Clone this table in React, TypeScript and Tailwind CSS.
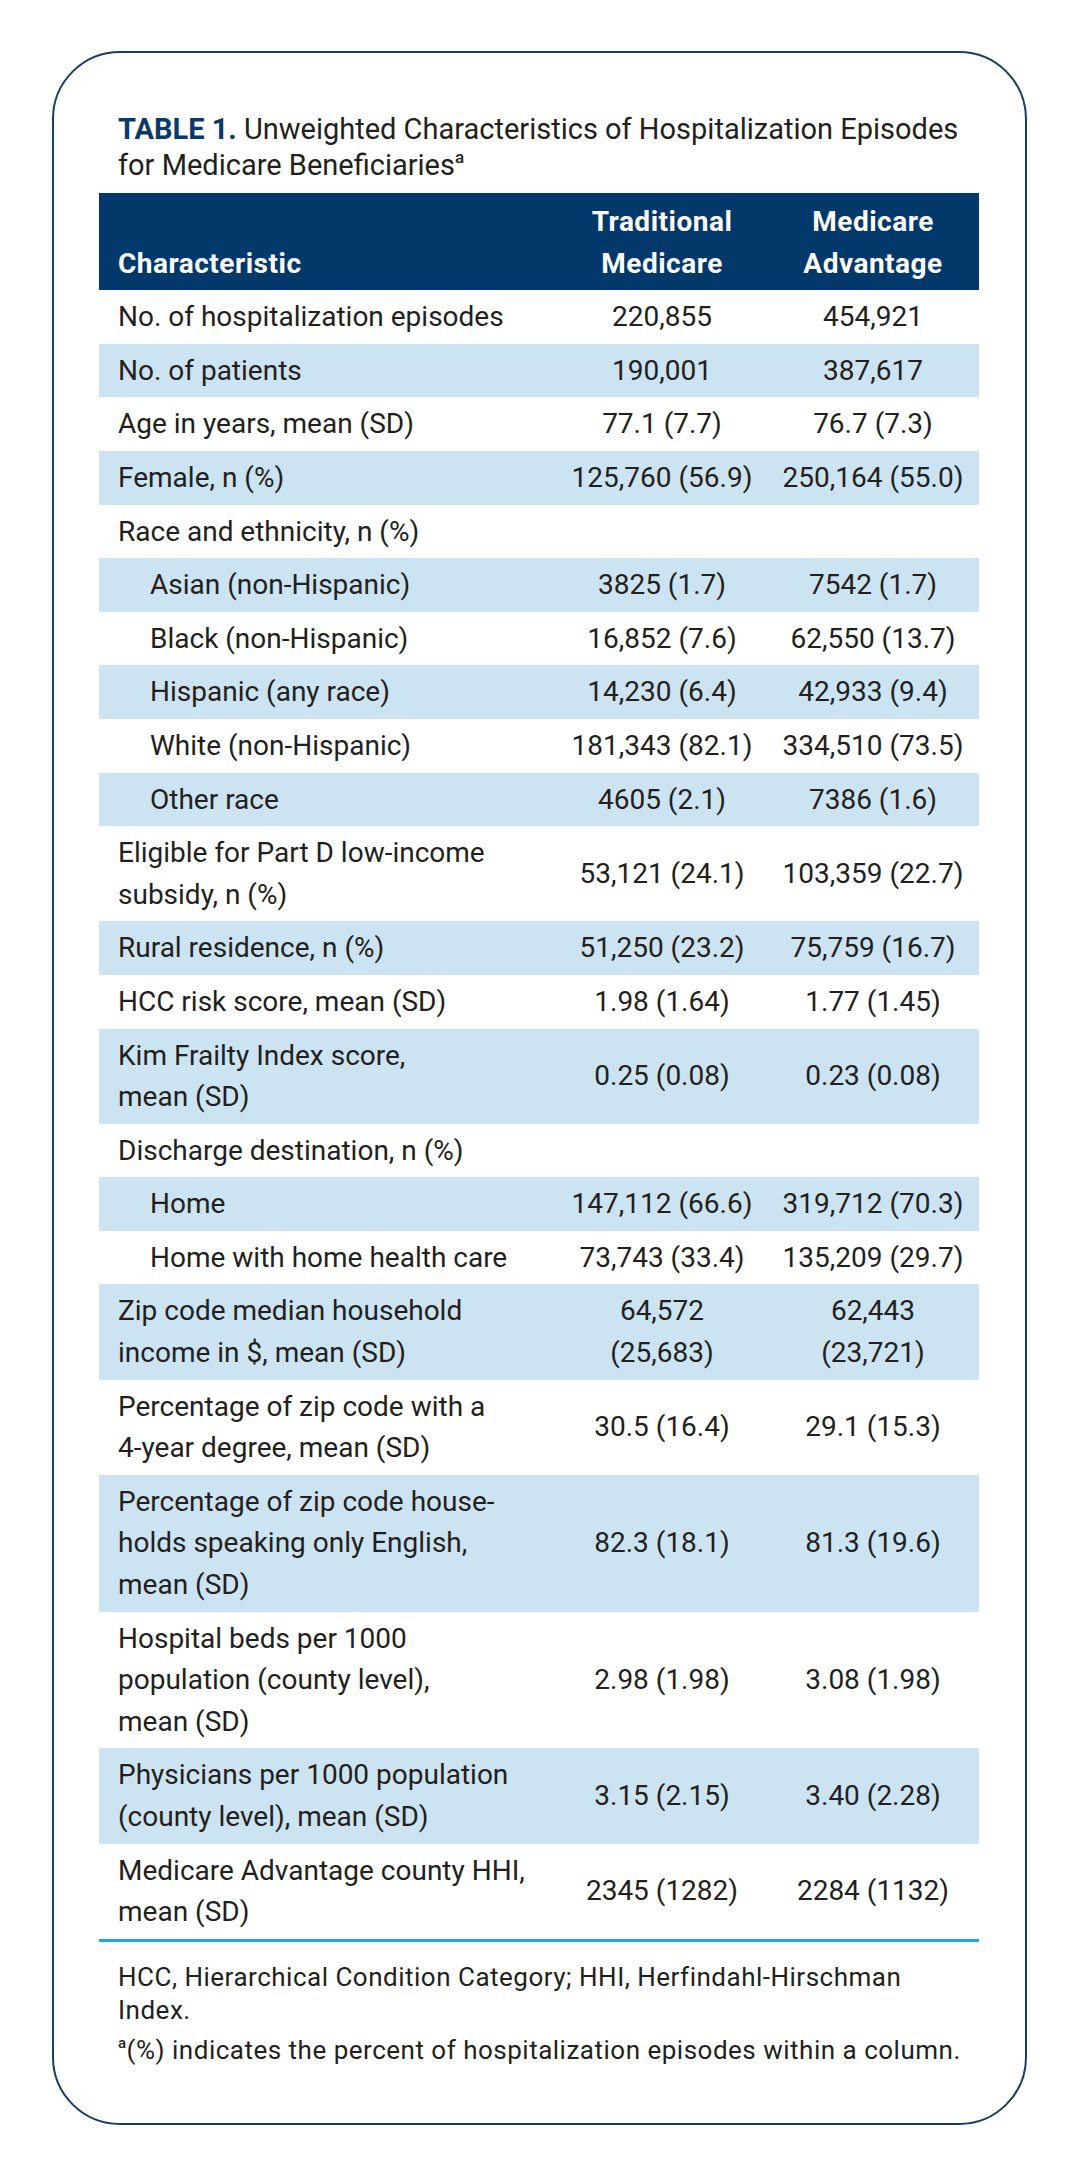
type Row = {
  label: string[];
  indent?: boolean;
  tm?: string[];
  ma?: string[];
};

const rows: Row[] = [
  { label: ['No. of hospitalization episodes'], tm: ['220,855'], ma: ['454,921'] },
  { label: ['No. of patients'], tm: ['190,001'], ma: ['387,617'] },
  { label: ['Age in years, mean (SD)'], tm: ['77.1 (7.7)'], ma: ['76.7 (7.3)'] },
  { label: ['Female, n (%)'], tm: ['125,760 (56.9)'], ma: ['250,164 (55.0)'] },
  { label: ['Race and ethnicity, n (%)'] },
  { label: ['Asian (non-Hispanic)'], indent: true, tm: ['3825 (1.7)'], ma: ['7542 (1.7)'] },
  { label: ['Black (non-Hispanic)'], indent: true, tm: ['16,852 (7.6)'], ma: ['62,550 (13.7)'] },
  { label: ['Hispanic (any race)'], indent: true, tm: ['14,230 (6.4)'], ma: ['42,933 (9.4)'] },
  { label: ['White (non-Hispanic)'], indent: true, tm: ['181,343 (82.1)'], ma: ['334,510 (73.5)'] },
  { label: ['Other race'], indent: true, tm: ['4605 (2.1)'], ma: ['7386 (1.6)'] },
  { label: ['Eligible for Part D low-income', 'subsidy, n (%)'], tm: ['53,121 (24.1)'], ma: ['103,359 (22.7)'] },
  { label: ['Rural residence, n (%)'], tm: ['51,250 (23.2)'], ma: ['75,759 (16.7)'] },
  { label: ['HCC risk score, mean (SD)'], tm: ['1.98 (1.64)'], ma: ['1.77 (1.45)'] },
  { label: ['Kim Frailty Index score,', 'mean (SD)'], tm: ['0.25 (0.08)'], ma: ['0.23 (0.08)'] },
  { label: ['Discharge destination, n (%)'] },
  { label: ['Home'], indent: true, tm: ['147,112 (66.6)'], ma: ['319,712 (70.3)'] },
  { label: ['Home with home health care'], indent: true, tm: ['73,743 (33.4)'], ma: ['135,209 (29.7)'] },
  { label: ['Zip code median household', 'income in $, mean (SD)'], tm: ['64,572', '(25,683)'], ma: ['62,443', '(23,721)'] },
  { label: ['Percentage of zip code with a', '4-year degree, mean (SD)'], tm: ['30.5 (16.4)'], ma: ['29.1 (15.3)'] },
  {
    label: ['Percentage of zip code house-', 'holds speaking only English,', 'mean (SD)'],
    tm: ['82.3 (18.1)'],
    ma: ['81.3 (19.6)'],
  },
  {
    label: ['Hospital beds per 1000', 'population (county level),', 'mean (SD)'],
    tm: ['2.98 (1.98)'],
    ma: ['3.08 (1.98)'],
  },
  { label: ['Physicians per 1000 population', '(county level), mean (SD)'], tm: ['3.15 (2.15)'], ma: ['3.40 (2.28)'] },
  { label: ['Medicare Advantage county HHI,', 'mean (SD)'], tm: ['2345 (1282)'], ma: ['2284 (1132)'] },
];

function Lines({ items }: { items?: string[] }) {
  if (!items) return null;
  return (
    <>
      {items.map((line, i) => (
        <div key={i} className="whitespace-nowrap">
          {line}
        </div>
      ))}
    </>
  );
}

export default function App() {
  return (
    <div className="w-[1079px] h-[2177px] bg-white pt-[51px] px-[52px] font-[Roboto,sans-serif] text-[#231f20]">
      <div className="h-[2074px] border-2 border-[#173e66] rounded-[68px] pt-[58px] pl-[45px] pr-[47px]">
        {/* Title */}
        <div className="px-[19px] text-[29px] leading-[36px] whitespace-nowrap">
          <span className="font-bold text-[#0b3a6a]">TABLE 1.</span> Unweighted Characteristics of Hospitalization
          Episodes
          <br />
          for Medicare Beneficiaries
          <sup className="text-[17px] font-medium top-[-0.7em]">a</sup>
        </div>

        {/* Table */}
        <div className="mt-[10px] w-[880px] text-[28px] leading-[41.6px]">
          <div className="grid grid-cols-[458px_210px_212px] bg-[#02386a] text-white font-bold tracking-[0.5px] pt-[8px] pb-[6px]">
            <div className="pl-[19px] flex items-end">Characteristic</div>
            <div className="text-center">
              <div>Traditional</div>
              <div>Medicare</div>
            </div>
            <div className="text-center">
              <div>Medicare</div>
              <div>Advantage</div>
            </div>
          </div>

          {rows.map((row, i) => (
            <div
              key={i}
              className={`grid grid-cols-[458px_210px_212px] py-[6px] ${i % 2 === 1 ? 'bg-[#cce3f2]' : 'bg-white'}`}
            >
              <div className={row.indent ? 'pl-[51px]' : 'pl-[19px]'}>
                <Lines items={row.label} />
              </div>
              <div className="flex flex-col justify-center items-center">
                <Lines items={row.tm} />
              </div>
              <div className="flex flex-col justify-center items-center">
                <Lines items={row.ma} />
              </div>
            </div>
          ))}

          <div className="h-[3px] bg-[#1ba9e1]" />
        </div>

        {/* Footnotes */}
        <div className="mt-[19px] px-[19px] text-[26px] leading-[33px] tracking-[0.5px] whitespace-nowrap">
          <p>
            HCC, Hierarchical Condition Category; HHI, Herfindahl-Hirschman
            <br />
            Index.
          </p>
          <p className="mt-[7px]">
            <sup className="text-[15px] font-medium top-[-0.75em]">a</sup>(%) indicates the percent of
            hospitalization episodes within a column.
          </p>
        </div>
      </div>
    </div>
  );
}
